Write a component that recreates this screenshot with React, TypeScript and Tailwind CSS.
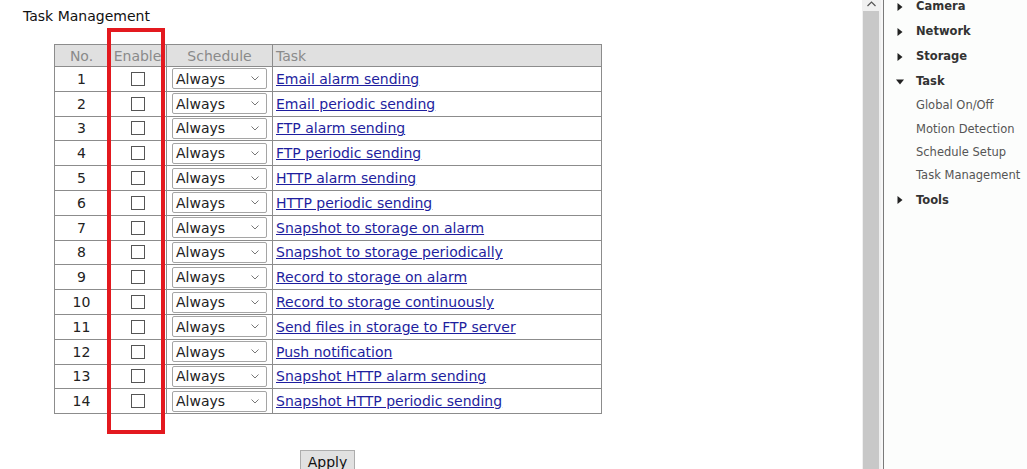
import { useState } from "react";

const tasks = [
  "Email alarm sending",
  "Email periodic sending",
  "FTP alarm sending",
  "FTP periodic sending",
  "HTTP alarm sending",
  "HTTP periodic sending",
  "Snapshot to storage on alarm",
  "Snapshot to storage periodically",
  "Record to storage on alarm",
  "Record to storage continuously",
  "Send files in storage to FTP server",
  "Push notification",
  "Snapshot HTTP alarm sending",
  "Snapshot HTTP periodic sending",
];

const menu = [
  { label: "Camera", open: false },
  { label: "Network", open: false },
  { label: "Storage", open: false },
  { label: "Task", open: true },
];

const subItems = ["Global On/Off", "Motion Detection", "Schedule Setup", "Task Management"];

const Caret = ({ open }: { open: boolean }) => (
  <svg width="8" height="8" viewBox="0 0 8 8" className="shrink-0">
    {open ? <polygon points="0,1.5 8,1.5 4,6.5" fill="#222" /> : <polygon points="1.5,0 6.5,4 1.5,8" fill="#222" />}
  </svg>
);

const TaskRow = ({ no, task }: { no: number; task: string }) => {
  const [enabled, setEnabled] = useState(false);

  return (
    <tr className="h-[24.8px]">
      <td className="border border-[#8c8c8c] text-center">{no}</td>
      <td className="border border-[#8c8c8c] text-center">
        <input
          type="checkbox"
          checked={enabled}
          onChange={() => setEnabled(!enabled)}
          className="appearance-none w-[14px] h-[14px] border border-[#555] bg-white align-middle relative top-[-1px]"
        />
      </td>
      <td className="border border-[#8c8c8c] px-[5px]">
        <div className="flex items-center justify-between h-[21px] w-[95px] border border-[#a5a5a5] rounded-[2px] bg-white pl-[3px] pr-[7px]">
          <span>Always</span>
          <svg width="8" height="5" viewBox="0 0 8 5">
            <polyline points="0.5,0.5 4,4 7.5,0.5" fill="none" stroke="#777" strokeWidth="1" />
          </svg>
        </div>
      </td>
      <td className="border border-[#8c8c8c] pl-[3px]">
        <a href="#" className="text-[#1e1e9e] underline">
          {task}
        </a>
      </td>
    </tr>
  );
};

export default function App() {
  return (
    <div className="flex h-[469px] w-[1027px] overflow-hidden bg-white text-[#222] font-['DejaVu_Sans',sans-serif]">
      <div className="relative w-[862px] shrink-0">
        <div className="pl-[23px] pt-[7px] text-[14px] leading-[18px] text-[#111]">Task Management</div>

        <table className="ml-[54px] mt-[19px] w-[548px] border-collapse text-[14px] leading-[18px]">
          <thead>
            <tr className="h-[22px] bg-[#e0e0e0] text-[#8a8a8a]">
              <th className="w-[54px] border border-[#8c8c8c] font-normal">No.</th>
              <th className="w-[58px] border border-[#8c8c8c] font-normal">Enable</th>
              <th className="w-[106px] border border-[#8c8c8c] font-normal">Schedule</th>
              <th className="border border-[#8c8c8c] font-normal text-left pl-[3px]">Task</th>
            </tr>
          </thead>
          <tbody>
            {tasks.map((task, i) => (
              <TaskRow key={task} no={i + 1} task={task} />
            ))}
          </tbody>
        </table>

        <div className="flex mt-[36px] pl-[300px]">
          <button className="h-[24px] w-[55px] bg-[#e1e1e1] border border-[#adadad] text-[14px] text-[#111]">Apply</button>
        </div>

        {/* red highlight round the Enable column */}
        <div className="absolute left-[107px] top-[28px] w-[58px] h-[406px] border-[4px] border-[#e3191f]" />
      </div>

      <div className="flex flex-col w-[19px] shrink-0 bg-[#f0f0f0]">
        <div className="h-[11px] flex justify-center">
          <svg width="9" height="6" viewBox="0 0 9 6" className="mt-[1px]">
            <polyline points="0.5,5 4.5,1 8.5,5" fill="none" stroke="#555" strokeWidth="1.2" />
          </svg>
        </div>
        <div className="flex-1 ml-[1px] mr-[2px] bg-[#c8c8c8]" />
      </div>
      <div className="w-[2px] bg-[#f7f7f7]" />
      <div className="w-[1px] bg-[#7a7a7a]" />

      <div className="flex-1 bg-[#fcfdfc] pl-[12px] text-[11.5px] leading-[15px]">
        <div className="mt-[-6px]">
          {menu.map((m) => (
            <div key={m.label} className="flex items-center h-[25px]">
              <Caret open={m.open} />
              <span className="ml-[12px] font-bold text-[#333]">{m.label}</span>
            </div>
          ))}
          {subItems.map((s) => (
            <div key={s} className="flex items-center h-[23.4px] pl-[20px] text-[#555]">
              {s}
            </div>
          ))}
          <div className="flex items-center h-[25px]">
            <Caret open={false} />
            <span className="ml-[12px] font-bold text-[#333]">Tools</span>
          </div>
        </div>
      </div>
    </div>
  );
}
